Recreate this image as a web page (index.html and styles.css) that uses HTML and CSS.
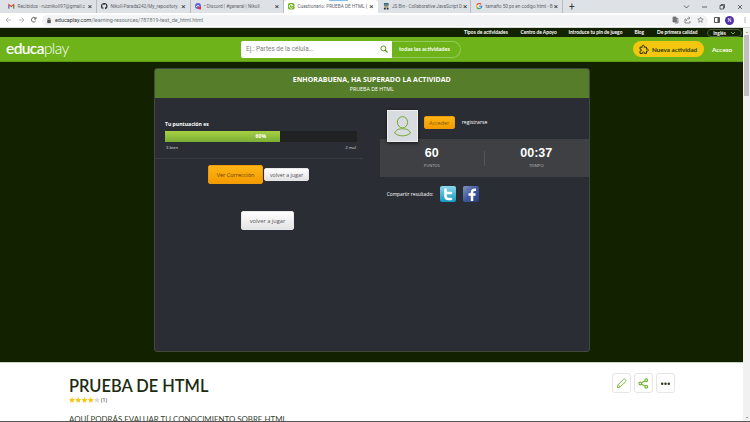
FILE: index.html
```html
<!DOCTYPE html>
<html lang="es">
<head>
<meta charset="utf-8">
<title>Cuestionario: PRUEBA DE HTML</title>
<link rel="stylesheet" href="styles.css">
</head>
<body>
<div class="browser">
  <div class="tabs">
    <div class="tab first"><svg class="fav" viewBox="0 0 12 12"><path d="M1.5 10V3l4.500 3.500L10.500 3v7" fill="none" stroke="#ea4335" stroke-width="2"/><path d="M1.500 10V4" stroke="#4285f4" stroke-width="2"/><path d="M10.500 10V4" stroke="#34a853" stroke-width="2"/></svg><span class="tt">Recibidos - ruiznikoll97@gmail.c</span><span class="x">×</span></div>
    <div class="tab"><svg class="fav" viewBox="0 0 16 16"><path fill="#24292e" d="M8 0a8 8 0 0 0-2.500 15.600c.4.100.5-.2.500-.4v-1.500c-2.200.5-2.700-1-2.700-1-.4-.9-.9-1.200-.9-1.200-.7-.5.100-.5.100-.5.800.1 1.200.8 1.200.8.700 1.200 1.900.9 2.300.7.100-.5.300-.9.500-1.100-1.800-.2-3.600-.9-3.600-4 0-.9.300-1.600.8-2.100-.1-.2-.4-1 .1-2.100 0 0 .7-.2 2.200.8a7.500 7.500 0 0 1 4 0c1.500-1 2.200-.8 2.200-.8.400 1.100.2 1.900.1 2.100.5.600.8 1.300.8 2.100 0 3.100-1.900 3.800-3.700 4 .3.300.6.800.6 1.500v2.300c0 .200.1.500.5.400A8 8 0 0 0 8 0z"/></svg><span class="tt">Nikoll-Parada242/My_repository.</span><span class="x">×</span></div>
    <div class="tab"><svg class="fav" viewBox="0 0 14 14"><circle cx="6.500" cy="6.500" r="6.500" fill="#5662ea"/><path d="M3 8.500c1-4 6-4 7 0" fill="none" stroke="#fff" stroke-width="2"/><circle cx="10.500" cy="10.500" r="3.500" fill="#e5323e"/></svg><span class="tt">• Discord | #general | Nikoll</span><span class="x">×</span></div>
    <div class="tab active"><svg class="fav" viewBox="0 0 14 14"><rect width="14" height="14" rx="4" fill="#6cb51b"/><path d="M10 9.800a4 4 0 1 1 .8-3.800H6" fill="none" stroke="#fff" stroke-width="2"/></svg><span class="tt">Cuestionario: PRUEBA DE HTML (</span><span class="x">×</span></div>
    <div class="tab js"><svg class="fav" viewBox="0 0 14 14"><path fill="#375f78" d="M2 0h10v6H2z"/><path fill="#b8a263" d="M3 6h8v4H3z"/><path fill="#28333b" d="M2 10h4v4H2zm6 0h4v4H8z"/><path stroke="#fff" d="M4 3h2m2 0h2"/></svg><span class="tt">JS Bin - Collaborative JavaScript D</span><span class="x">×</span></div>
    <div class="tab last"><svg class="fav" viewBox="0 0 14 14" fill="none" stroke-width="2.500"><path d="M11 3A5.500 5.500 0 0 0 2 4" stroke="#ea4335"/><path d="M2 4a6 6 0 0 0 0 6" stroke="#fbbc05"/><path d="M2 10a5.500 5.500 0 0 0 8 1" stroke="#34a853"/><path d="M10 11c2-1 2.500-2.500 2.500-4H7" stroke="#4285f4"/></svg><span class="tt">tamaño 50 px en codigo html - B</span><span class="x">×</span></div>
    <span class="plus">+</span>
    <svg class="wincontrols" viewBox="0 0 62 8" fill="none" stroke="#444" stroke-width=".8"><path d="m2 2.500 2.500 2.500L7 2.500M20 4h5M38 2.500h3.500V6H38zM39 2.500v-1h3.500V5h-1M56 2l4 4m0-4-4 4"/></svg>
  </div>
  <div class="toolbar">
    <svg class="nav" viewBox="0 0 38 10" fill="none" stroke="#aaa" stroke-width=".8"><path d="M5 5H0m2.500-2.500L0 5l2.500 2.500M13 5h5m-2.500-2.500L18 5l-2.500 2.500"/><path stroke="#444" d="M29.500 3.300a2.300 2.300 0 1 0 .2 2.600M30 2v2h-2"/></svg>
    <div class="omnibox">
      <svg class="lock" viewBox="0 0 6 8"><path fill="#555" d="M1 3h4v4H1z"/><path d="M2 3V1.500h2V3" fill="none" stroke="#555" stroke-width=".8"/></svg>
      <span class="url"><b>educaplay.com</b>/learning-resources/787819-test_de_html.html</span>
      <svg class="actions" viewBox="0 0 34 8" fill="none" stroke="#666" stroke-width=".7"><path fill="#777" d="M1 1h3l1 5H1z"/><path d="M4 2.500h2v4.500H3M14 3h-1v4h5V5M14.500 5c0-2 1-3 3-3m-1-1.200L18 2l-1.500 1.500M28.500 1.200l.8 1.700 1.900.2-1.400 1.300.4 1.900-1.700-1-1.700 1 .4-1.900-1.400-1.300 1.900-.2z"/></svg>
    </div>
    <svg class="side" viewBox="0 0 6 6"><path d="M.5.5h5v5h-5z" fill="none" stroke="#555"/><path fill="#555" d="M3.500 1H5v4H3.500z"/></svg>
    <span class="profile">N</span>
    <svg class="dots" viewBox="0 0 2 6" fill="#666"><circle cx="1" cy="1" r=".6"/><circle cx="1" cy="3" r=".6"/><circle cx="1" cy="5" r=".6"/></svg>
  </div>
</div>
<div class="viewport">
  <div class="page">
    <nav class="topnav">
      <span class="n1">Tipos de actividades</span><span class="n2">Centro de Apoyo</span><span class="n3">Introduce tu pin de juego</span><span class="n4">Blog</span><span class="n5">De primera calidad</span>
      <span class="lang"><span>Inglés</span><svg viewBox="0 0 6 4"><path d="m1 1 2 2 2-2" fill="none" stroke="#6eb31a"/></svg></span>
    </nav>
    <header class="header">
      <div class="logo"><b>educa</b><span>play</span></div>
      <div class="search">
        <span class="ph">Ej.: Partes de la célula...</span>
        <svg viewBox="0 0 8 8" fill="none" stroke="#5b9a1b"><circle cx="3.400" cy="3.400" r="2.500"/><path stroke-width="1.300" d="m5.200 5.200 2.300 2.300"/></svg>
      </div>
      <div class="all"><span>todas las actividades</span></div>
      <div class="new"><svg viewBox="0 0 10 10" fill="none" stroke="#263006"><path d="M1 3.200h2.300c-1-2.700 2.800-2.700 1.900 0h2.300v2c2.500-1 2.500 2.700 0 1.900v2.300H5.300c.7-2-2.500-2-1.800 0H1V7c2 .7 2-2.300 0-1.700z"/></svg><span>Nueva actividad</span></div>
      <span class="access">Acceso</span>
    </header>
    <main class="stage">
      <section class="card">
        <div class="title"><h2>ENHORABUENA, HA SUPERADO LA ACTIVIDAD</h2><p>PRUEBA DE HTML</p></div>
        <div class="cols">
          <div class="left">
            <div class="score">
              <span class="label">Tu puntuación es</span>
              <div class="bar"><div class="fill"><span>60%</span></div></div>
              <div class="legend"><span>3 bien</span><span>2 mal</span></div>
            </div>
            <div class="buttons"><span class="btn orange big">Ver Corrección</span><span class="btn light small">volver a jugar</span></div>
            <div class="again"><span class="btn light mid">volver a jugar</span></div>
          </div>
          <div class="right">
            <div class="stats">
              <div class="stat"><b>60</b><small>PUNTOS</small></div>
              <div class="stat time"><b>00:37</b><small>TIEMPO</small></div>
              <div class="user">
                <svg class="avatar" viewBox="0 0 31 32"><path fill="#d8dce1" d="M0 0h31v32H0z"/><g fill="none" stroke="#6ba51d"><ellipse cx="15.500" cy="12" rx="5.500" ry="6"/><path d="M7 23.500c2-4.500 5.500-4.500 8.500-4.500s6.500 0 8.500 4.500c-4 4-13 4-17 0z"/></g></svg>
                <span class="btn orange login">Acceder</span><span class="register">registrarse</span>
              </div>
            </div>
            <div class="share">
              <span class="sharetext">Compartir resultado:</span>
              <svg viewBox="0 0 16 16"><defs><linearGradient id="tw" x2="0" y2="1"><stop stop-color="#8bd8ea"/><stop offset="1" stop-color="#1597c2"/></linearGradient></defs><rect width="16" height="16" rx="2" fill="url(#tw)"/><path d="M5.500 3.500v6.500q0 3 3 3H11M5.500 7H11" fill="none" stroke="#fff" stroke-width="2.600" stroke-linecap="round"/></svg>
              <svg class="fb" viewBox="0 0 16 16"><defs><linearGradient id="fb" x2="1" y2="1"><stop stop-color="#8593c2"/><stop offset=".5" stop-color="#41599d"/><stop offset="1" stop-color="#263f83"/></linearGradient></defs><rect width="16" height="16" rx="2" fill="url(#fb)"/><path d="M9 15V6q0-2.500 4-2.300M5.500 8.500h7" fill="none" stroke="#fff" stroke-width="2.500"/></svg>
            </div>
          </div>
        </div>
      </section>
    </main>
    <section class="info">
      <div class="infotext">
        <h1>PRUEBA DE HTML</h1>
        <div class="rating"><svg viewBox="0 0 31 6"><defs><path id="star" d="m3 0 .9 1.900 2.100.3-1.500 1.500.4 2.100L3 4.800l-1.900 1 .4-2.100L0 2.200l2.100-.3z"/></defs><g fill="#f3c915"><use href="#star"/><use href="#star" x="6.250"/><use href="#star" x="12.500"/><use href="#star" x="18.750"/></g><use href="#star" x="25" fill="#d8dadd"/></svg><span>(1)</span></div>
        <p class="desc">AQUÍ PODRÁS EVALUAR TU CONOCIMIENTO SOBRE HTML</p>
      </div>
      <div class="tools">
        <span><svg viewBox="0 0 12 12" fill="none" stroke="#70b52b"><path d="m1.500 10.500.6-3L8.200 1.400q.8-.7 1.600 0l.8.800q.7.800 0 1.600L4.500 9.900zM2.500 7.500l2 2"/></svg></span>
        <span><svg viewBox="0 0 12 12" fill="none" stroke="#70b52b" stroke-width="1.200"><circle cx="2.500" cy="6" r="1.500"/><circle cx="9" cy="2.500" r="1.500"/><circle cx="9" cy="9.500" r="1.500"/><path d="m3.900 5.300 3.700-2M3.900 6.700l3.700 2"/></svg></span>
        <span><svg viewBox="0 0 12 12" fill="#26351b"><circle cx="2.400" cy="6.200" r="1.350"/><circle cx="6" cy="6.200" r="1.350"/><circle cx="9.600" cy="6.200" r="1.350"/></svg></span>
      </div>
    </section>
  </div>
  <div class="scroll"><span class="arrow up"></span><span class="thumb"></span><span class="arrow down"></span></div>
</div>
</body>
</html>
```
FILE: styles.css
```css
* { box-sizing: border-box; }
body { margin: 0; width: 750px; height: 422px; overflow: hidden; display: flex; flex-direction: column; background: #fff; font-family: "Open Sans", sans-serif; }
h1, h2, p { margin: 0; }
svg { flex: none; display: block; }
span, b { white-space: nowrap; }

.browser { height: 28px; flex: none; color: #62656a; }
.tabs { height: 13px; background: #dee1e6; display: flex; align-items: center; }
.tab { width: 93.500px; height: 13px; padding: 0 4px; display: flex; align-items: center; font: 4.700px Roboto, sans-serif; border-right: 1px solid #b8bbc0; background-clip: padding-box; }
.tab.first { width: 97px; padding-left: 8px; }
.tab.active { background: linear-gradient(#83bdf0, #83bdf0) 45px 0 / 19px 1px no-repeat #fff; border-right: 0; border-radius: 3px 3px 0 0; }
.tab.js { padding-left: 5px; font-size: 4.600px; }
.tab.last { width: 92px; padding-left: 5px; }
.fav { width: 6.500px; height: 6.500px; margin-right: 3px; }
.tt { flex: 1; }
.x { font-size: 8px; color: #333; margin-left: 1px; }
.plus { font: 10px Roboto, sans-serif; color: #333; margin-left: 6px; }
.wincontrols { width: 62px; height: 8px; margin: 0 6px 0 auto; }
.toolbar { height: 15px; background: #fff; border-bottom: 1px solid #d5d9da; display: flex; align-items: center; }
.nav { width: 38px; height: 10px; margin-left: 6px; margin-right: -2px; }
.omnibox { width: 666px; height: 11px; border-radius: 6px; background: #f1f3f4; display: flex; align-items: center; padding-left: 4px; }
.lock { width: 6px; height: 7px; }
.url { font: 5.420px Roboto, sans-serif; margin-left: 3px; color: #73777b; }
.url b { font-weight: 400; color: #333; }
.actions { width: 34px; height: 8px; margin: 0 2px 0 auto; }
.side { width: 6px; height: 6px; margin-left: 6px; }
.profile { width: 9px; height: 9px; margin: 0 10px 0 5px; border-radius: 50%; background: #5131a8; color: #fff; font: 5px/9px Roboto, sans-serif; text-align: center; }
.dots { width: 2px; height: 6px; }

.viewport { height: 394px; display: flex; border-bottom: 1px solid #555; }
.page { width: 743px; overflow: hidden; }
.scroll { width: 7px; background: #f1f1f1; display: flex; flex-direction: column; align-items: center; padding: 3px 0; }
.thumb { width: 5px; height: 61px; background: #c1c1c1; margin-top: 2px; }
.arrow { width: 0; height: 0; border: 1.500px solid transparent; }
.up { border-bottom-color: #666; border-top: 0; height: 2px; }
.down { border-top-color: #444; border-bottom: 0; margin-top: auto; }

.topnav { height: 9px; background: #122200; color: #fff; display: flex; align-items: center; font: 700 4.850px/9px Lato, sans-serif; padding-left: 464px; }
.topnav > span { flex: none; }
.n1 { width: 56.500px; }
.n2 { width: 48px; }
.n3 { width: 66px; }
.n4 { width: 22.500px; }
.n5 { width: 50px; }
.lang { width: 35px; height: 8px; border: 1px solid #4b5940; border-radius: 4px; display: flex; align-items: center; justify-content: center; gap: 4px; line-height: 6px; }
.lang svg { width: 6px; height: 4px; }
.header { height: 25px; background: #6eb31a; color: #fff; display: flex; align-items: center; border-bottom: 1px solid #5f9c17; }
.logo { width: 235px; margin-left: 6px; margin-top: -3px; font: 15.500px/20px Lato, sans-serif; display: flex; letter-spacing: -.600px; }
.logo b { font-weight: 600; }
.logo span { font-weight: 300; }
.search { width: 151px; height: 17px; background: #fff; border-radius: 2px 0 0 2px; display: flex; align-items: center; justify-content: space-between; padding: 0 4px 0 5px; }
.ph { font: 6.450px Roboto, sans-serif; color: #808080; }
.search svg { width: 8px; height: 8px; }
.all { width: 69px; height: 17px; border: 1px solid #94c95c; border-left: 0; border-radius: 0 9px 9px 0; font: 700 5.550px/15px Lato, sans-serif; padding-left: 7px; }
.new { width: 71px; height: 16px; border-radius: 8px; background: #f3c70f; margin-left: 172px; display: flex; align-items: center; color: #29370a; font: 700 6.300px Lato, sans-serif; padding-left: 6px; gap: 3px; }
.new svg { width: 10px; height: 10px; }
.access { font: 700 6.400px Lato, sans-serif; margin-left: 8px; }

.stage { height: 301px; background: #122200; padding: 6px 0 0 154px; border-bottom: 1px solid #c9d1c2; }
.card { width: 435.500px; height: 284px; background: #2b2d35; border: 1px solid #42483d; border-radius: 3px; overflow: hidden; }
.title { height: 29px; background: #567d2a; color: #fff; text-align: center; padding-top: 5px; }
.title h2 { font: 700 7px/11px "Open Sans", sans-serif; }
.title p { font: 5.300px/8px "Open Sans", sans-serif; }
.cols { display: flex; }
.left { width: 225px; }
.score { width: 208px; height: 61px; border-bottom: 1px solid #3a3c44; padding: 22px 6px 0 10px; }
.label { display: block; font: 700 5.100px/8px "Open Sans", sans-serif; color: #fff; }
.bar { height: 11px; background: #202123; margin-top: 3px; }
.fill { width: 60%; height: 11px; background: linear-gradient(#a9d044, #7aae35); color: #fff; font: 700 5.200px/11px "Open Sans", sans-serif; text-align: right; padding-right: 14px; }
.legend { display: flex; justify-content: space-between; font: 4.200px/6px "Open Sans", sans-serif; color: #ddd; margin: 3px 1px 0; }
.buttons { display: flex; align-items: center; padding: 6px 0 0 53px; gap: 1px; }
.btn { display: block; text-align: center; border-radius: 2px; font-family: "Open Sans", sans-serif; }
.orange { background: linear-gradient(#ffb515, #f39b00); color: #654306; border: 1px solid #ee9c09; }
.light { background: linear-gradient(#fff, #e3e3e5); color: #555; border: 1px solid #e8e8e9; }
.big { width: 55px; height: 19px; font-size: 5.500px; line-height: 19px; }
.small { width: 45px; height: 13px; font-size: 5.300px; line-height: 12px; }
.again { padding: 27px 0 0 86px; }
.mid { width: 53px; height: 19px; font-size: 5.700px; line-height: 19px; }
.right { width: 209px; }
.stats { height: 38px; margin-top: 41px; background: #3e4044; position: relative; display: flex; align-items: center; }
.stat { width: 104px; height: 15px; display: flex; flex-direction: column; align-items: center; justify-content: center; color: #fff; }
.stat + .time { border-left: 1px solid #53565d; }
.stat b { font: 700 12.500px/13px "Liberation Sans", sans-serif; }
.stat small { font: 4px/6px "Open Sans", sans-serif; color: #bbb; margin-top: 3px; }
.user { position: absolute; left: 7px; top: -29px; display: flex; align-items: center; }
.avatar { width: 31px; height: 32px; box-shadow: 0 1px 3px #15161a; border: 1px solid #eee; }
.login { width: 31px; height: 13px; line-height: 12px; font-size: 5.300px; margin: -7px 0 0 6px; color: #835708; }
.register { font-size: 5.100px; line-height: 8px; color: #fff; margin: -8px 0 0 7px; }
.share { display: flex; align-items: center; padding: 9px 0 0 7px; }
.share svg { width: 16px; height: 16px; }
.share .fb { margin-left: 7px; }
.sharetext { width: 53px; font-size: 4.800px; line-height: 8px; color: #fff; }

.info { height: 59px; background: #fff; display: flex; }
.infotext { width: 543px; padding: 13px 0 0 69px; color: #1b2b10; }
h1 { font: 600 16.400px/19px Lato, sans-serif; white-space: nowrap; }
.rating { height: 8px; margin-top: 1px; display: flex; align-items: center; font: 5.200px/8px "Open Sans", sans-serif; gap: 1px; }
.rating svg { width: 31px; height: 6px; }
.desc { font: 7.900px/11px Lato, sans-serif; margin-top: 10px; white-space: nowrap; color: #38432f; }
.tools { display: flex; gap: 3px; padding: 10px 0 0 69px; }
.tools span { width: 19px; height: 20px; border: 1px solid #e4e5e4; border-radius: 3px; display: flex; align-items: center; justify-content: center; }
.tools svg { width: 11px; height: 11px; }
```
